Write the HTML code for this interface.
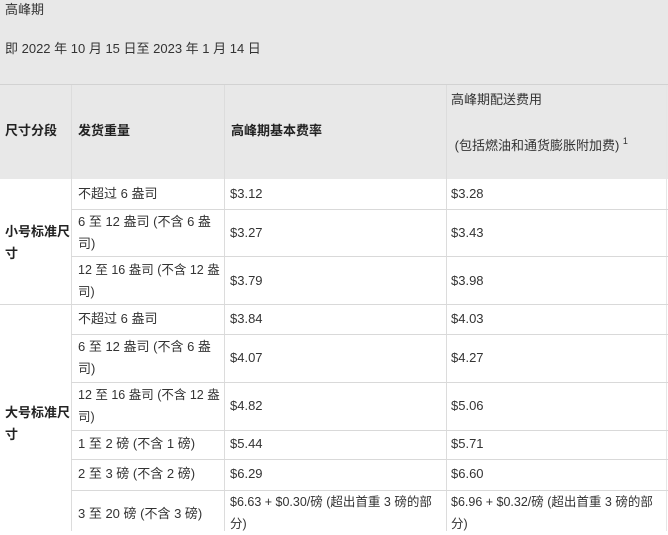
<!DOCTYPE html>
<html><head><meta charset="utf-8"><style>
*{margin:0;padding:0;box-sizing:border-box}
body{width:668px;height:531px;overflow:hidden;background:#fff;font-family:"Liberation Sans","Noto Sans CJK SC",sans-serif;font-size:13px;color:#333;position:relative}
.a{position:absolute}
.hl{position:absolute;height:1px;background:#d9d9d9}
.vl{position:absolute;width:1px;background:#dcdcdc}
.t{position:absolute;line-height:22px;white-space:nowrap}
.s{font-size:12.5px}
b{font-weight:bold;color:#222}
</style></head><body>
<div class="a" style="left:0;top:0;width:668px;height:179px;background:#e8e8e8"></div>
<div class="t" style="left:5px;top:0px;line-height:20px">高峰期</div>
<div class="t" style="left:5px;top:38px">即 2022 年 10 月 15 日至 2023 年 1 月 14 日</div>
<div class="hl" style="left:0;top:84px;width:668px;background:#d2d2d2"></div>
<div class="t" style="left:5px;top:120px"><b>尺寸分段</b></div>
<div class="t" style="left:78px;top:120px"><b>发货重量</b></div>
<div class="t" style="left:231px;top:120px"><b>高峰期基本费率</b></div>
<div class="t" style="left:451px;top:89px">高峰期配送费用</div>
<div class="t" style="left:451px;top:130px">&nbsp;(包括燃油和通货膨胀附加费) <sup style="font-size:9px;vertical-align:6px">1</sup></div>
<div class="vl" style="left:71px;top:85px;height:446px"></div>
<div class="vl" style="left:224px;top:85px;height:446px"></div>
<div class="vl" style="left:446px;top:85px;height:446px"></div>
<div class="vl" style="left:666px;top:85px;height:446px;background:#e6e6e6"></div>
<div class="hl" style="left:71px;top:209px;width:597px"></div>
<div class="hl" style="left:71px;top:256px;width:597px"></div>
<div class="hl" style="left:0;top:304px;width:668px"></div>
<div class="hl" style="left:71px;top:334px;width:597px"></div>
<div class="hl" style="left:71px;top:382px;width:597px"></div>
<div class="hl" style="left:71px;top:430px;width:597px"></div>
<div class="hl" style="left:71px;top:459px;width:597px"></div>
<div class="hl" style="left:71px;top:490px;width:597px"></div>

<div class="t" style="left:5px;top:221px"><b>小号标准尺<br>寸</b></div>
<div class="t" style="left:5px;top:402px"><b>大号标准尺<br>寸</b></div>

<div class="t" style="left:78px;top:183px">不超过 6 盎司</div>
<div class="t" style="left:78px;top:211px">6 至 12 盎司 (不含 6 盎<br>司)</div>
<div class="t s" style="left:78px;top:259px">12 至 16 盎司 (不含 12 盎<br>司)</div>
<div class="t" style="left:78px;top:308px">不超过 6 盎司</div>
<div class="t" style="left:78px;top:336px">6 至 12 盎司 (不含 6 盎<br>司)</div>
<div class="t s" style="left:78px;top:384px">12 至 16 盎司 (不含 12 盎<br>司)</div>
<div class="t" style="left:78px;top:433px">1 至 2 磅 (不含 1 磅)</div>
<div class="t" style="left:78px;top:463px">2 至 3 磅 (不含 2 磅)</div>
<div class="t" style="left:78px;top:503px">3 至 20 磅 (不含 3 磅)</div>

<div class="t" style="left:230px;top:183px">$3.12</div>
<div class="t" style="left:230px;top:222px">$3.27</div>
<div class="t" style="left:230px;top:270px">$3.79</div>
<div class="t" style="left:230px;top:308px">$3.84</div>
<div class="t" style="left:230px;top:347px">$4.07</div>
<div class="t" style="left:230px;top:395px">$4.82</div>
<div class="t" style="left:230px;top:433px">$5.44</div>
<div class="t" style="left:230px;top:463px">$6.29</div>
<div class="t s" style="left:230px;top:491px">$6.63 + $0.30/磅 (超出首重 3 磅的部<br>分)</div>

<div class="t" style="left:451px;top:183px">$3.28</div>
<div class="t" style="left:451px;top:222px">$3.43</div>
<div class="t" style="left:451px;top:270px">$3.98</div>
<div class="t" style="left:451px;top:308px">$4.03</div>
<div class="t" style="left:451px;top:347px">$4.27</div>
<div class="t" style="left:451px;top:395px">$5.06</div>
<div class="t" style="left:451px;top:433px">$5.71</div>
<div class="t" style="left:451px;top:463px">$6.60</div>
<div class="t s" style="left:451px;top:491px">$6.96 + $0.32/磅 (超出首重 3 磅的部<br>分)</div>
</body></html>
